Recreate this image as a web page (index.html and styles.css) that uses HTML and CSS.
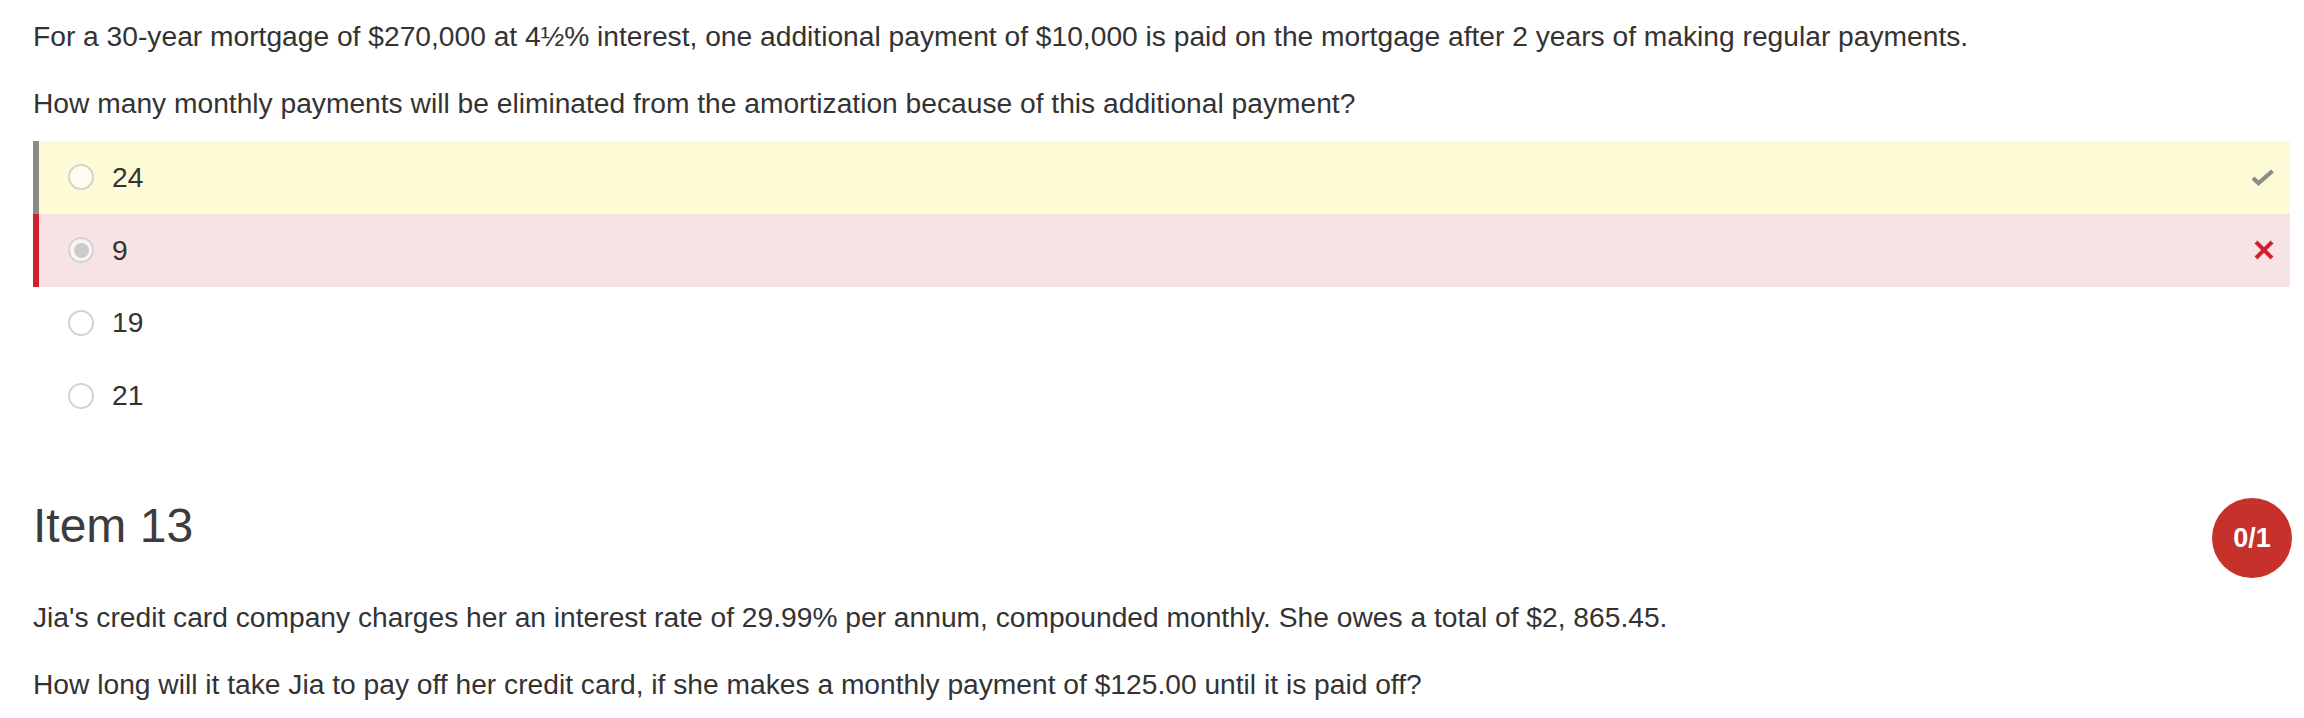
FILE: index.html
```html
<!DOCTYPE html>
<html lang="en">
<head>
    <meta charset="UTF-8">
    <meta name="viewport" content="width=device-width, initial-scale=1.0">
    <title>Quiz review</title>
    <link rel="stylesheet" href="styles.css">
</head>
<body>

    <div class="item">
        <div class="stem">
            <p>For a 30-year mortgage of $270,000 at 4½% interest, one additional payment of $10,000 is paid on the mortgage after 2 years of making regular payments.</p>
            <p>How many monthly payments will be eliminated from the amortization because of this additional payment?</p>
        </div>

        <ul class="choices">
            <li class="choice correct">
                <input type="radio" name="q12" disabled>
                <span class="label">24</span>
                <svg class="mark" width="22" height="17" viewBox="0 0 22 17">
                    <path d="M1 9 L6.5 14.2 L20.5 2" fill="none" stroke="#8c8c8c" stroke-width="4.2"/>
                </svg>
            </li>
            <li class="choice wrong">
                <input type="radio" name="q12" checked disabled>
                <span class="label">9</span>
                <svg class="mark" width="20" height="20" viewBox="0 0 20 20">
                    <path d="M2 2 L18 18 M18 2 L2 18" fill="none" stroke="#d0222e" stroke-width="4"/>
                </svg>
            </li>
            <li class="choice">
                <input type="radio" name="q12" disabled>
                <span class="label">19</span>
            </li>
            <li class="choice">
                <input type="radio" name="q12" disabled>
                <span class="label">21</span>
            </li>
        </ul>
    </div>

    <div class="item">
        <div class="item-head">
            <h2>Item 13</h2>
            <span class="score">0/1</span>
        </div>
        <div class="stem">
            <p>Jia's credit card company charges her an interest rate of 29.99% per annum, compounded monthly. She owes a total of $2, 865.45.</p>
            <p>How long will it take Jia to pay off her credit card, if she makes a monthly payment of $125.00 until it is paid off?</p>
        </div>
    </div>

</body>
</html>
```

FILE: styles.css
```css
body {
    margin: 0;
    padding: 17px 14px 0 33px;
    font-family: "Liberation Sans", Arial, sans-serif;
    color: #333;
    background: #fff;
}
.stem p {
    margin: 0;
    font-size: 28.2px;
    line-height: 38px;
}
.stem p + p {
    margin-top: 29px;
}
.choices {
    list-style: none;
    margin: 19px 0 0;
    padding: 0;
}
.choice {
    display: flex;
    align-items: center;
    height: 72.75px;
    padding: 0 16px 0 29px;
    border-left: 6px solid transparent;
    font-size: 28.2px;
}
.choice.correct {
    background: #fcfbd6;
    border-left-color: #8a8a8a;
}
.choice.wrong {
    background: #f7e3e3;
    border-left-color: #d0222e;
}
.choice input[type="radio"] {
    -webkit-appearance: none;
    appearance: none;
    box-sizing: border-box;
    width: 26px;
    height: 26px;
    margin: 0 18px 0 0;
    border: 2px solid #d3d3d3;
    border-radius: 50%;
    background: rgba(255, 255, 255, 0.6);
    display: grid;
    place-items: center;
}
.choice input[type="radio"]:checked::before {
    content: "";
    width: 15px;
    height: 15px;
    border-radius: 50%;
    background: #cbcbcb;
}
.choice .label {
    flex: 1;
}
.mark {
    display: block;
}
.item + .item {
    margin-top: 66px;
}
.item-head {
    display: flex;
    justify-content: space-between;
    align-items: flex-start;
    margin-bottom: 20px;
}
.item-head h2 {
    margin: 1px 0 0;
    font-size: 48px;
    line-height: 54px;
    font-weight: normal;
    color: #3c3c3c;
}
.score {
    width: 80px;
    height: 80px;
    margin-right: -2px;
    border-radius: 50%;
    background: #c7312b;
    color: #fff;
    font-size: 27px;
    font-weight: bold;
    display: flex;
    align-items: center;
    justify-content: center;
}
```
